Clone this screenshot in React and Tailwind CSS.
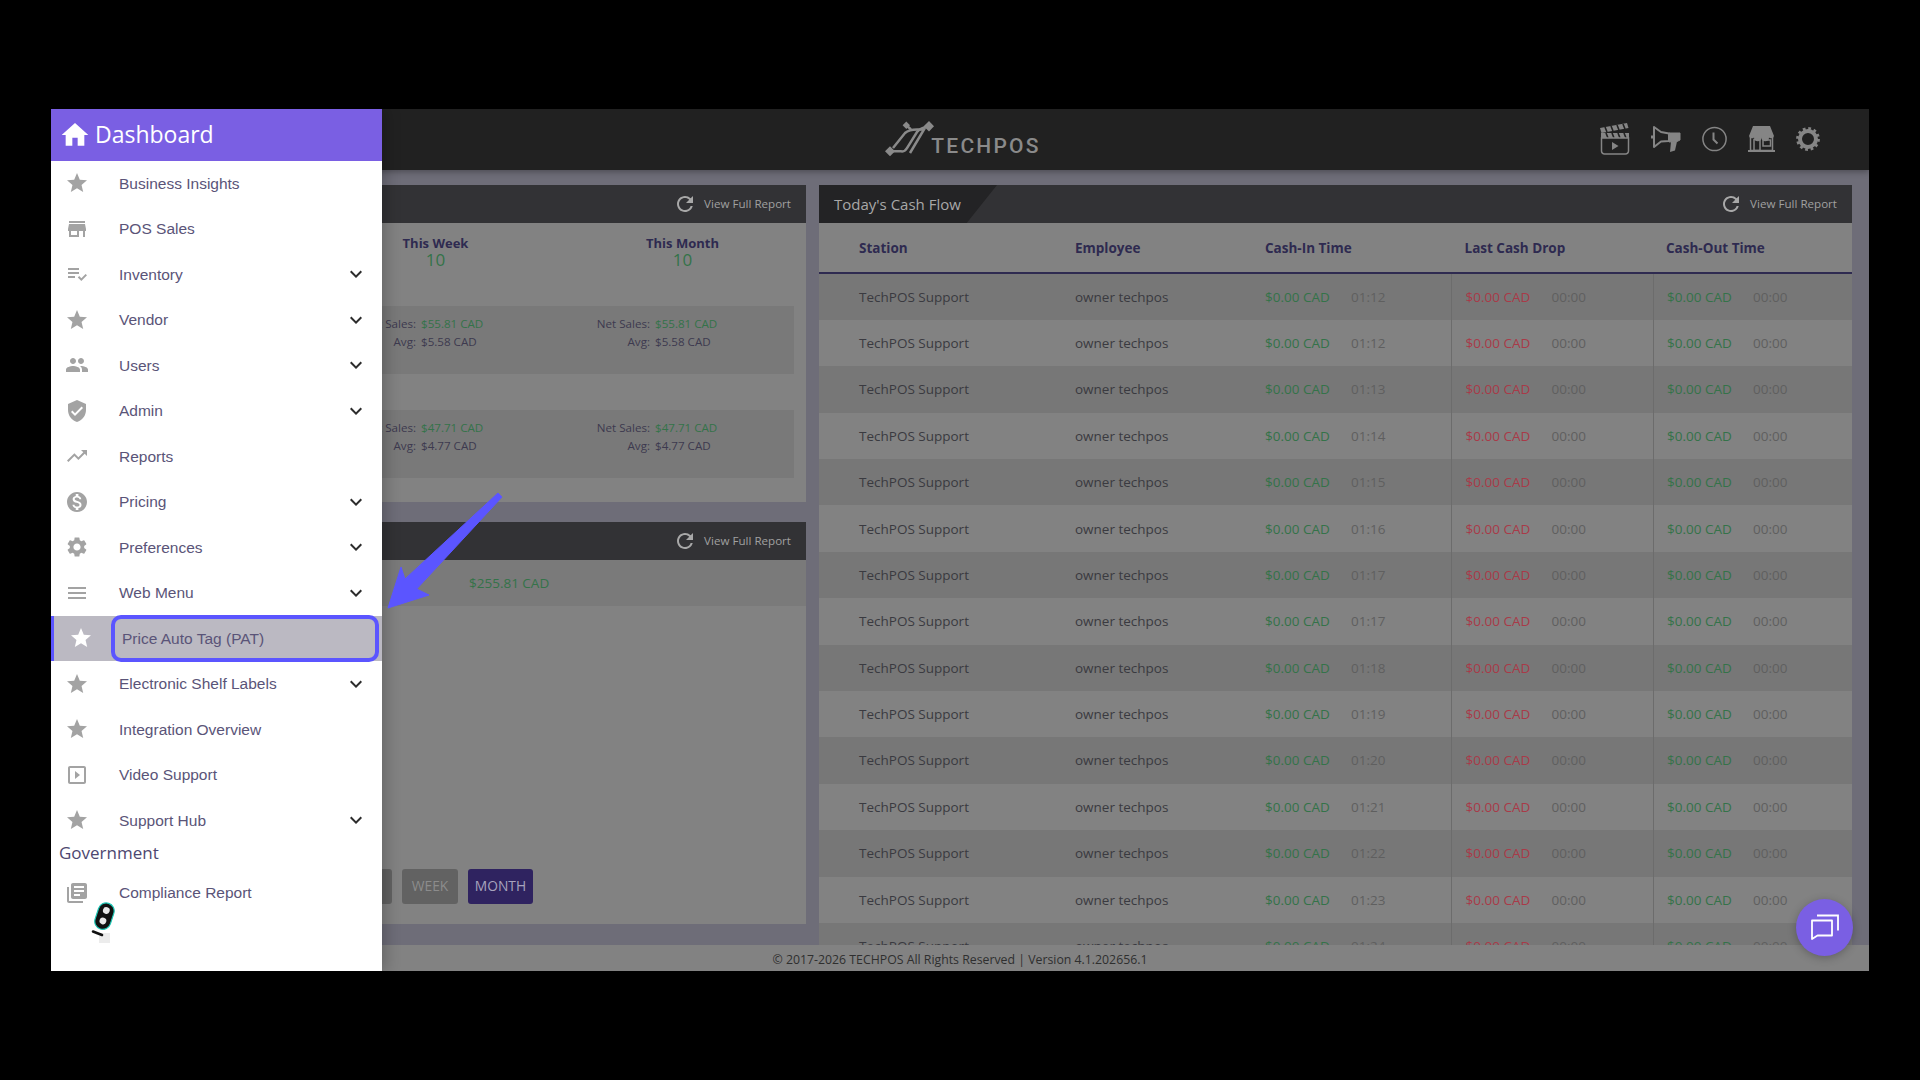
import React from "react";
import {
  MdStar, MdStore, MdPlaylistAddCheck, MdPeople, MdVerifiedUser, MdTrendingUp,
  MdMonetizationOn, MdSettings, MdMenu, MdSlideshow, MdLibraryBooks, MdHome,
  MdKeyboardArrowDown, MdRefresh,
} from "react-icons/md";

const menu = [
  ["Business Insights", MdStar, false],
  ["POS Sales", MdStore, false],
  ["Inventory", MdPlaylistAddCheck, true],
  ["Vendor", MdStar, true],
  ["Users", MdPeople, true],
  ["Admin", MdVerifiedUser, true],
  ["Reports", MdTrendingUp, false],
  ["Pricing", MdMonetizationOn, true],
  ["Preferences", MdSettings, true],
  ["Web Menu", MdMenu, true],
  ["Price Auto Tag (PAT)", MdStar, false, true],
  ["Electronic Shelf Labels", MdStar, true],
  ["Integration Overview", MdStar, false],
  ["Video Support", MdSlideshow, false],
  ["Support Hub", MdStar, true],
];

const times = ["01:12", "01:12", "01:13", "01:14", "01:15", "01:16", "01:17", "01:17", "01:18", "01:19", "01:20", "01:21", "01:22", "01:23", "01:24"];

function MenuRow({ label, Icon, chevron, active }) {
  if (active) {
    return (
      <div className="flex h-[45.5px] items-center border-l-[3px] border-[#5b55ff] bg-[#bbb9c2]">
        <div className="flex w-[54px] justify-center"><Icon size={24} className="text-white" /></div>
        <div className="ml-[3px] flex h-[47px] w-[268px] items-center rounded-[10px] border-[4px] border-[#5b55ff] pl-[7px] text-[#5a5478]">{label}</div>
      </div>
    );
  }
  return (
    <div className="flex h-[45.5px] items-center">
      <div className="flex w-[52px] justify-center"><Icon size={24} className="text-[#a3a3a3]" /></div>
      <div className="ml-[16px] flex-1 text-[#5a5478]">{label}</div>
      {chevron && <MdKeyboardArrowDown size={24} className="mr-[14px] text-[#2c2c2c]" />}
    </div>
  );
}

function Sidebar() {
  return (
    <aside className="absolute left-0 top-0 z-10 flex h-full w-[331px] flex-col bg-white font-['Liberation_Sans',sans-serif] text-[15.5px] shadow-[4px_0_14px_rgba(0,0,0,0.22)]">
      <div className="flex h-[52px] shrink-0 items-center gap-[4px] bg-[#7a5fe3] pl-[8px] font-['Open_Sans',sans-serif] text-[23px] text-white">
        <MdHome size={32} />
        <span>Dashboard</span>
      </div>
      <div>
        {menu.map(([label, Icon, chevron, active]) => (
          <MenuRow key={label} label={label} Icon={Icon} chevron={chevron} active={active} />
        ))}
      </div>
      <div className="h-[27px] pl-[8px] pt-[1px] font-['Open_Sans',sans-serif] text-[17px] leading-[18px] text-[#4d4770]">Government</div>
      <MenuRow label="Compliance Report" Icon={MdLibraryBooks} />
    </aside>
  );
}

function Clapper() {
  return (
    <svg width="30" height="32" viewBox="0 0 30 32" fill="none" stroke="#858585" strokeWidth="1.5">
      <path d="M0 5 27 0l1.5 5L1.5 10z" fill="#858585" stroke="none" />
      <path d="M5 4l2 5M11 3l2 5M17 2l2 5M23 1l2 5" stroke="#212121" strokeWidth="1.6" />
      <rect x="1" y="10" width="28" height="5" fill="#858585" stroke="none" />
      <path d="M6 10l2 5M12 10l2 5M18 10l2 5M24 10l2 5" stroke="#212121" strokeWidth="1.6" />
      <path d="M1.5 15h27v13a3 3 0 0 1-3 3h-21a3 3 0 0 1-3-3z" />
      <path d="M12 19v8l6.5-4z" fill="#858585" stroke="none" />
    </svg>
  );
}

function Megaphone() {
  return (
    <svg width="30" height="27" viewBox="0 0 30 27" fill="none" stroke="#858585" strokeWidth="2">
      <path d="M3 1v20L10 15.5 18 15V7.5L10 6z" strokeLinejoin="round" />
      <path d="M0 9.5h2.5v3H0z" fill="#858585" stroke="none" />
      <path d="M18 7h11v7l-3 1.5-8 .5z" fill="#858585" stroke="#858585" strokeWidth="1" />
      <path d="M20 15.5 19 26l5-1.5 2-9z" fill="#858585" stroke="none" />
    </svg>
  );
}

function Clock() {
  return (
    <svg width="25" height="26" viewBox="0 0 25 26" fill="none" stroke="#858585" strokeWidth="1.5">
      <circle cx="12.5" cy="13" r="11.6" />
      <path d="M11.5 6.5v7l4 4" strokeWidth="2" />
    </svg>
  );
}

function Store() {
  return (
    <svg width="27" height="26" viewBox="0 0 27 26" fill="none" stroke="#858585" strokeWidth="1.5">
      <path d="M5 0h17l4 10a3 3 0 0 1-5 1.5 3.5 3.5 0 0 1-7.5 0 3.5 3.5 0 0 1-7.5 0 3 3 0 0 1-5-1.5z" fill="#858585" stroke="none" />
      <path d="M2.5 11v13.5h22V11" />
      <rect x="6" y="13.5" width="6" height="11" />
      <rect x="15" y="14" width="7.5" height="6" />
      <path d="M0 25h27" strokeWidth="2" />
    </svg>
  );
}

function Gear() {
  return (
    <svg width="24" height="24" viewBox="0 0 24 24" fill="none" stroke="#858585">
      <circle cx="12" cy="12" r="8" strokeWidth="4" />
      <circle cx="12" cy="12" r="10.4" strokeWidth="3" strokeDasharray="2.72 2.72" />
    </svg>
  );
}

function Logo() {
  return (
    <div className="flex items-start pb-[8px]">
      <svg width="55" height="45" viewBox="0 0 55 45" fill="none" stroke="#8a8a8a" strokeWidth="2.5">
        <path d="M11 38.3H22Q26 39 28 35L38 19Q41 15 50 13.3" />
        <path d="M14 35 26 20Q30 16.5 38 16.5H45L31 40" />
        <path d="M27.3 12.3 32 16.5" />
        <path d="M11 33.3 16 38.3 11 43.3 6 38.3z" fill="#8a8a8a" stroke="none" />
        <path d="M27.3 8.6 31 12.3 27.3 16 23.6 12.3z" fill="#8a8a8a" stroke="none" />
        <path d="M50 8 55 13.3 50 18.6 44.7 13.3z" fill="#8a8a8a" stroke="none" />
      </svg>
      <span className="-ml-[3px] mt-[21px] font-['Roboto',sans-serif] text-[21px] font-medium leading-[24px] tracking-[2.2px] text-[#8a8a8a]">TECHPOS</span>
    </div>
  );
}

function TopBar() {
  return (
    <header className="grid h-[61px] shrink-0 grid-cols-[1fr_auto_1fr] items-center bg-[#212121] shadow-[0_2px_6px_rgba(0,0,0,0.3)]">
      <div />
      <Logo />
      <div className="flex items-center justify-end gap-[21px] pr-[49px]">
        <Clapper /><Megaphone /><Clock /><Store /><Gear />
      </div>
    </header>
  );
}

function ViewFull() {
  return (
    <div className="flex items-center gap-[7px] pr-[15px] text-[11.6px] text-[#a0a0a0]">
      <MdRefresh size={24} className="text-[#a8a8a8]" />
      <span>View Full Report</span>
    </div>
  );
}

function PanelHeader() {
  return (
    <div className="flex h-[38px] shrink-0 items-center justify-end bg-[#323235]"><ViewFull /></div>
  );
}

function SalesCell({ sales, avg }) {
  return (
    <div className="w-[234px] text-[11.6px] leading-[18.5px]">
      <div className="flex">
        <span className="w-[90px] text-right text-[#3d3a4f]">Net Sales:</span>
        <span className="ml-[5px] text-[#347349]">{sales} CAD</span>
      </div>
      <div className="flex">
        <span className="w-[90px] text-right text-[#3d3a4f]">Avg:</span>
        <span className="ml-[5px] text-[#3d3a4f]">{avg} CAD</span>
      </div>
    </div>
  );
}

function SalesStripe({ sales, avg, className }) {
  return (
    <div className={`ml-[24px] mr-[12px] flex h-[68px] items-start bg-[#797979] pt-[9px] ${className}`}>
      <SalesCell sales={sales} avg={avg} />
      <SalesCell sales={sales} avg={avg} />
      <SalesCell sales={sales} avg={avg} />
    </div>
  );
}

function Stat({ title }) {
  return (
    <div className="w-[247px] text-center">
      <div className="text-[13px] font-bold leading-[18px] text-[#2e2a50]">{title}</div>
      <div className="text-[17px] leading-[15px] text-[#347349]">10</div>
    </div>
  );
}

function LeftColumn() {
  return (
    <div className="flex w-[738px] shrink-0 flex-col gap-[20px]">
      <section className="flex h-[317px] flex-col bg-[#828282]">
        <PanelHeader />
        <div className="-ml-[3px] flex pt-[10.5px]">
          <Stat title="Today" /><Stat title="This Week" /><Stat title="This Month" />
        </div>
        <SalesStripe sales="$55.81" avg="$5.58" className="mt-[39px]" />
        <SalesStripe sales="$47.71" avg="$4.77" className="mt-[36px]" />
      </section>
      <section className="flex h-[402px] flex-col justify-between bg-[#828282] pb-[20px]">
        <div>
          <PanelHeader />
          <div className="flex h-[46px] items-center bg-[#7a7a7a] pl-[401px] text-[13.5px] text-[#347349]">$255.81 CAD</div>
        </div>
        <div className="flex gap-[10px] pl-[271px] text-[13.8px]">
          <div className="flex h-[35px] w-[53px] items-center justify-center rounded-[3px] bg-[#626262] text-[#8c8c8c]">DAY</div>
          <div className="flex h-[35px] w-[56px] items-center justify-center rounded-[3px] bg-[#626262] text-[#8c8c8c]">WEEK</div>
          <div className="flex h-[35px] w-[65px] items-center justify-center rounded-[3px] bg-[#2f2360] text-[#a7a3bd]">MONTH</div>
        </div>
      </section>
    </div>
  );
}

const cols = "grid grid-cols-[256px_190px_186px_201.5px_199.5px]";

function Money({ time, red }) {
  return (
    <div className="flex">
      <span className={`w-[86px] ${red ? "text-[#a93a48]" : "text-[#347349]"}`}>$0.00 CAD</span>
      <span className="text-[#5f5f5f]">{time}</span>
    </div>
  );
}

function CashFlow() {
  return (
    <section className="flex min-w-0 flex-1 flex-col overflow-hidden">
      <div className="flex h-[38px] shrink-0 items-center justify-between bg-[#323235]">
        <div className="flex h-full w-[178px] items-center bg-[#232325] pl-[15px] text-[15px] text-[#a8a8a8] [clip-path:polygon(0_0,100%_0,83%_100%,0_100%)]">Today's Cash Flow</div>
        <ViewFull />
      </div>
      <div className={`${cols} h-[50.5px] shrink-0 items-center border-b-2 border-[#2e2a50] bg-[#828282] pt-[2px] text-[13.5px] font-bold text-[#2e2a50]`}>
        <div className="pl-[40px]">Station</div>
        <div>Employee</div>
        <div>Cash-In Time</div>
        <div className="pl-[13.5px]">Last Cash Drop</div>
        <div className="pl-[13.5px]">Cash-Out Time</div>
      </div>
      <div className="text-[13.5px]">
        {times.map((t, i) => (
          <div key={i} className={`${cols} h-[46.4px] items-center ${i % 2 === 0 ? "bg-[#777777]" : "bg-[#828282]"} text-[#3a3a40]`}>
            <div className="pl-[40px]">TechPOS Support</div>
            <div>owner techpos</div>
            <div><Money time={t} /></div>
            <div className="flex h-full items-center border-l border-[#6c6c6c] pl-[13.5px]"><Money time="00:00" red /></div>
            <div className="flex h-full items-center border-l border-[#6c6c6c] pl-[13.5px]"><Money time="00:00" /></div>
          </div>
        ))}
      </div>
    </section>
  );
}

function Overlays() {
  return (
    <>
      <svg className="absolute left-[329px] top-[378px] z-20" width="125" height="125" viewBox="380 486 125 125">
        <path d="M388 607 401 566 405 578 498 492 502 496 416.7 588 429 594z" fill="#5b55ff" stroke="#5b55ff" strokeWidth="1" strokeLinejoin="round" />
      </svg>
      <div className="absolute left-[48px] top-[824px] z-20 h-[10px] w-[11px] bg-[#ececec]" />
      <svg className="absolute left-[40px] top-[793px] z-20" width="27" height="36" viewBox="0 0 27 36">
        <g transform="rotate(18 13 14)">
          <rect x="5.5" y="0.5" width="16" height="27" rx="8" fill="#111" stroke="#1cc7b5" strokeWidth="1.2" />
          <circle cx="13.5" cy="8" r="3.4" fill="#e8e8e8" />
          <circle cx="13.5" cy="19" r="3.4" fill="#e8e8e8" />
        </g>
        <path d="M2 29.5l9 3.5" stroke="#111" strokeWidth="2.6" strokeLinecap="round" />
      </svg>
      <div className="absolute left-[1745px] top-[790px] z-20 flex h-[57px] w-[57px] items-center justify-center rounded-full bg-[#7a5fe3] shadow-[0_2px_8px_rgba(0,0,0,0.25)]">
        <svg width="28" height="26" viewBox="0 0 28 26" fill="none" stroke="white" strokeWidth="1.8">
          <path d="M1 6.5h20v15H6.5L1 25z" strokeLinejoin="round" />
          <path d="M6 1.5h21v15" />
        </svg>
      </div>
    </>
  );
}

export default function App() {
  return (
    <div className="h-[1080px] w-[1920px] overflow-hidden bg-black px-[51px] pt-[108.5px] font-['Open_Sans',sans-serif]">
      <div className="relative flex h-[862.5px] flex-col bg-[#6e6d78]">
        <TopBar />
        <main className="flex h-[775px] shrink-0 gap-[13px] overflow-hidden pl-[17px] pr-[17px] pt-[15.5px]">
          <LeftColumn />
          <CashFlow />
        </main>
        <footer className="flex h-[26.5px] shrink-0 items-center justify-center bg-[#828282] pt-[4px] text-[12.3px] text-[#2f2f2f]">© 2017-2026 TECHPOS All Rights Reserved | Version 4.1.202656.1</footer>
        <Sidebar />
        <Overlays />
      </div>
    </div>
  );
}
